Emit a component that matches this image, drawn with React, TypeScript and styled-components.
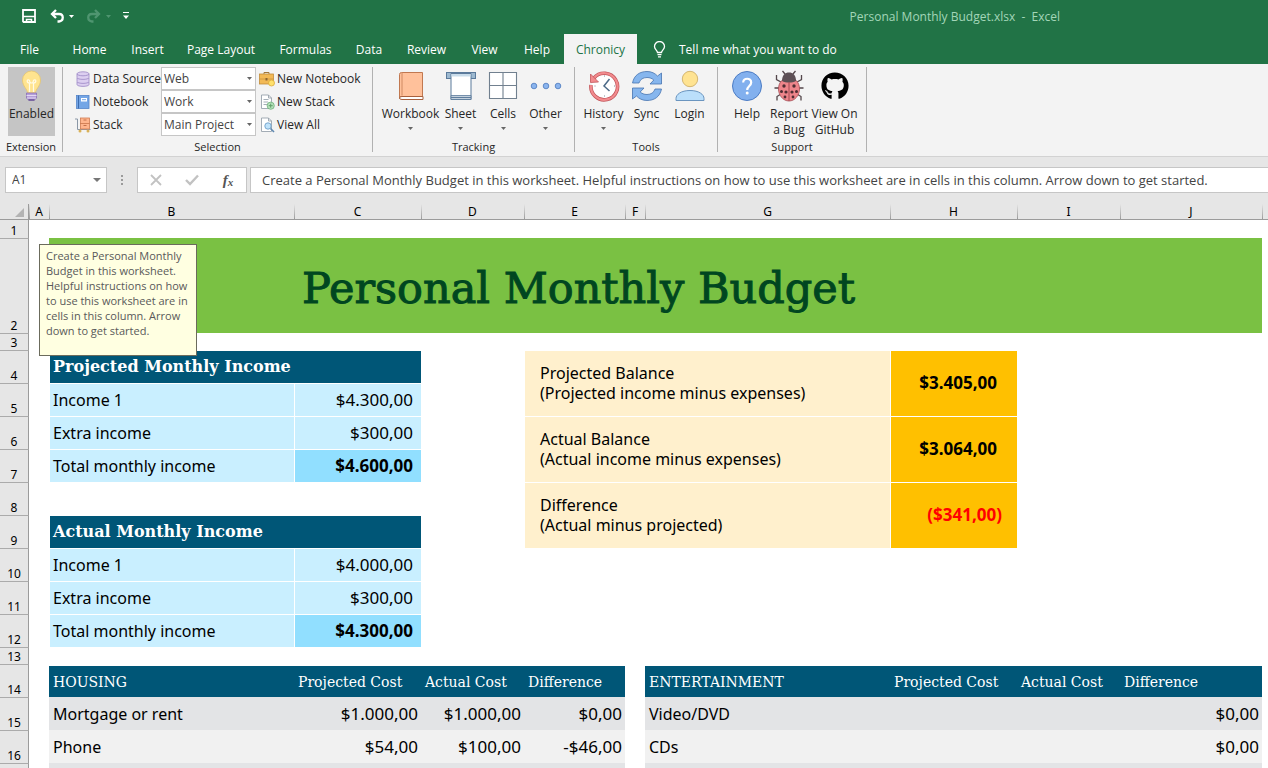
import React from 'react';
import styled, { createGlobalStyle, css } from 'styled-components';
import { FaGithub } from 'react-icons/fa';

const uiFont = '"Open Sans", "Segoe UI", sans-serif';
const cellFont = '"Noto Sans", "Lucida Sans", sans-serif';
const slabFont = '"DejaVu Serif", Rockwell, serif';

const GlobalStyle = createGlobalStyle`
  *, *::before, *::after { box-sizing: border-box; }
  body { margin: 0; background: #fff; font-family: ${uiFont}; font-size: 12px; color: #262626; }
  button, input, select { font: inherit; color: inherit; margin: 0; }
`;

/* ---------- window chrome ---------- */

const Window = styled.div`
  display: flex;
  flex-direction: column;
  height: 100vh;
  overflow: hidden;
`;

const TitleBar = styled.header`
  display: flex;
  align-items: center;
  height: 34px;
  padding: 0 0 2px 21px;
  background: #217346;
  color: #fff;
`;

const QuickButton = styled.button<{ $dim?: boolean }>`
  display: flex;
  align-items: center;
  gap: 4px;
  padding: 0;
  margin-right: 12px;
  border: 0;
  background: none;
  color: ${p => (p.$dim ? '#4f9570' : '#fff')};
`;

const DocumentName = styled.div`
  margin: 0 208px 0 auto;
  color: #a3d6b8;
  white-space: pre;
`;

const TabBar = styled.nav`
  display: flex;
  height: 30px;
  background: #217346;
  color: #fff;
`;

const Tab = styled.button<{ $active?: boolean; $width: number }>`
  flex: none;
  width: ${p => p.$width}px;
  padding: 0;
  border: 0;
  white-space: nowrap;
  background: ${p => (p.$active ? '#f3f3f3' : 'transparent')};
  color: ${p => (p.$active ? '#217346' : '#fff')};
`;

const TellMe = styled.button`
  display: flex;
  align-items: center;
  gap: 13px;
  padding: 0 0 0 16px;
  border: 0;
  background: none;
`;

/* ---------- ribbon ---------- */

const Ribbon = styled.section`
  display: flex;
  height: 93px;
  background: #f3f3f3;
  border-bottom: 1px solid #d2d2d2;
  color: #262626;
`;

const Group = styled.div<{ $width: number; $pad: number }>`
  display: flex;
  flex-direction: column;
  justify-content: space-between;
  flex: none;
  width: ${p => p.$width}px;
  margin: 3px 0 4px;
  border-right: 1px solid #b1b1b1;
  > div { padding-left: ${p => p.$pad}px; }
`;

const GroupBody = styled.div`
  display: flex;
  height: 70px;
`;

const GroupLabel = styled.h2`
  margin: 0;
  font-size: 11px;
  font-weight: 400;
  line-height: 10px;
  text-align: center;
  color: #262626;
`;

const BigButton = styled.button<{ $width: number; $pressed?: boolean }>`
  display: flex;
  flex-direction: column;
  align-items: center;
  flex: none;
  width: ${p => p.$width}px;
  height: 69px;
  padding: 3px 0 0;
  border: 0;
  white-space: pre;
  line-height: 16px;
  background: ${p => (p.$pressed ? '#c5c5c5' : 'transparent')};
  > svg:first-child { margin-bottom: 4px; flex: none; }
  > svg:nth-of-type(2) { margin-top: 5px; }
`;

const SelectionGrid = styled.div`
  display: grid;
  grid-template-columns: 86px 95px 1fr;
  grid-auto-rows: 23px;
  align-items: stretch;
`;

const FieldLabel = styled.label`
  display: flex;
  align-items: center;
  gap: 2px;
  white-space: nowrap;
`;

const Combo = styled.div`
  display: grid;
  align-items: center;
  > * { grid-area: 1 / 1; }
  > svg { justify-self: end; margin-right: 4px; pointer-events: none; }
`;

const ComboSelect = styled.select`
  appearance: none;
  width: 100%;
  height: 23px;
  padding: 0 2px;
  border: 1px solid #c6c6c6;
  border-radius: 0;
  background: #fff;
  color: #444;
`;

const SmallButton = styled.button`
  display: flex;
  align-items: center;
  gap: 2px;
  padding: 0 0 0 3px;
  border: 0;
  background: none;
  white-space: nowrap;
`;

/* ---------- formula bar ---------- */

const FormulaBar = styled.div`
  display: flex;
  align-items: center;
  height: 47px;
  padding: 0 0 2px 5px;
  background: #e6e6e6;
`;

const NameBox = styled.div`
  display: flex;
  align-items: center;
  width: 102px;
  height: 26px;
  padding-right: 5px;
  border: 1px solid #c6c6c6;
  background: #fff;
`;

const BareInput = styled.input`
  flex: 1;
  min-width: 0;
  padding: 0 0 0 6px;
  border: 0;
  outline: 0;
  background: none;
  color: #444;
`;

const Dots = styled.div`
  width: 30px;
  text-align: center;
  color: #9a9a9a;
  line-height: 0;
`;

const FormulaTools = styled.div`
  display: flex;
  align-items: center;
  justify-content: space-around;
  width: 110px;
  height: 26px;
  border: 1px solid #c6c6c6;
  background: #fff;
`;

const FormulaTool = styled.button`
  padding: 0;
  width: 30px;
  border: 0;
  background: none;
  color: #c2c2c2;
  line-height: 0;
`;

const FxButton = styled(FormulaTool)`
  color: #555;
  font: italic 700 15px/20px "Liberation Serif", serif;
  sub { font-size: 11px; line-height: 0; vertical-align: -1px; }
`;

const FormulaField = styled.div`
  display: flex;
  flex: 1;
  height: 26px;
  margin-left: 3px;
  padding-left: 5px;
  border: 1px solid #c6c6c6;
  border-right: 0;
  background: #fff;
  font-size: 13px;
`;

/* ---------- worksheet ---------- */

const Sheet = styled.main`
  position: relative;
  flex: 1;
  min-height: 0;
  overflow: hidden;
  background: #fff;
`;

const Grid = styled.table`
  width: 100%;
  table-layout: fixed;
  border-collapse: separate;
  border-spacing: 0;
  font-family: ${cellFont};
  font-size: 16px;
  line-height: 20px;
  color: #000;
  td, th { padding: 0; }
`;

const Row = styled.tr<{ $h: number }>`
  height: ${p => p.$h}px;
`;

const ColumnHead = styled.th`
  font-size: 12px;
  line-height: 15px;
  font-weight: 400;
  vertical-align: bottom;
  border-bottom: 1px solid #9b9b9b;
  background: linear-gradient(#e6e6e6, #9b9b9b) left / 1px 100% no-repeat #e6e6e6;
`;

const Corner = styled(ColumnHead)`
  text-align: right;
  background: #e6e6e6;
  border-right: 1px solid #9b9b9b;
  line-height: 0;
`;

const RowHead = styled.th`
  font-size: 12px;
  line-height: 15px;
  font-weight: 400;
  vertical-align: bottom;
  background: #e6e6e6;
  border-top: 1px solid #ababab;
  border-right: 1px solid #9b9b9b;
  tr:first-child > & { border-top: 0; }
`;

const Banner = styled.td`
  background: #7ac143;
  color: #004620;
  font-family: ${slabFont};
  font-size: 43px;
  line-height: 60px;
  -webkit-text-stroke: 1px #004620;
  && { padding: 4px 0 0 253px; }
`;

const IncomeTitle = styled.td`
  background: #005677;
  color: #fff;
  border-top: 1px solid #fff;
  border-left: 1px solid #fff;
  font-family: ${slabFont};
  font-size: 16px;
  font-weight: 700;
  && { padding-left: 3px; }
`;

const IncomeCell = styled.td<{ $amount?: boolean; $total?: boolean }>`
  background: ${p => (p.$total ? '#91dfff' : '#c9efff')};
  border-top: 1px solid #fff;
  border-left: 1px solid #fff;
  && { padding: ${p => (p.$amount ? '0 8px 0 0' : '0 0 0 3px')}; }
  ${p => p.$amount && css`text-align: right; font-size: 17px;`}
  ${p => p.$total && css`font-weight: 700;`}
`;

const BalanceCell = styled.td`
  background: #fff0cd;
  border-top: 1px solid #fff;
  border-left: 1px solid #fff;
  && { padding: 0 0 2px 15px; }
`;

const BalanceAmount = styled.td<{ $negative?: boolean }>`
  background: #ffc000;
  border-top: 1px solid #fff;
  border-left: 1px solid #fff;
  text-align: right;
  font-size: 17px;
  font-weight: 700;
  color: ${p => (p.$negative ? '#ff0000' : '#000')};
  && { padding: 0 ${p => (p.$negative ? 15 : 20)}px 2px 0; }
`;

const CostHead = styled.th`
  background: #005677;
  color: #fff;
  border-top: 2px solid #fff;
  font-family: ${slabFont};
  font-size: 14px;
  font-weight: 400;
  text-align: left;
  white-space: nowrap;
  && { padding-left: 4px; }
`;

const CostCell = styled.td<{ $alt?: boolean; $amount?: boolean }>`
  background: ${p => (p.$alt ? '#f1f1f1' : '#e3e4e6')};
  text-align: ${p => (p.$amount ? 'right' : 'left')};
  font-size: ${p => (p.$amount ? 17 : 16)}px;
  && { padding: 0 3px 0 4px; }
`;

const Tooltip = styled.aside`
  position: absolute;
  left: 39px;
  top: 40px;
  width: 158px;
  height: 112px;
  padding: 3px 2px 0 6px;
  border: 1px solid #6b6b5c;
  background: #ffffe1;
  color: #595959;
  font-size: 11px;
  line-height: 15px;
`;

/* ---------- icons ---------- */

const Caret = ({ color = '#666', size = 5 }: { color?: string; size?: number }) => (
  <svg width={size} height={size > 6 ? 4 : 3} viewBox="0 0 6 3" preserveAspectRatio="none"><path d="M0 0h6L3 3z" fill={color} /></svg>
);

const SaveIcon = () => (
  <svg width="16" height="16" viewBox="0 0 16 16" fill="none" stroke="currentColor" strokeWidth="1.800">
    <path d="M2 2h12v12H2.600L2 13.400z" /><path d="M2 8.500h12M5.500 14v-2.500h5V14" strokeWidth="1.500" />
  </svg>
);

const UndoIcon = ({ flip }: { flip?: boolean }) => (
  <svg width="16" height="14" viewBox="0 0 16 14" fill="none" stroke="currentColor" strokeWidth="2.300">
    <g transform={flip ? 'matrix(-1 0 0 1 16 0)' : undefined}>
      <path d="M7 1L3 5l4 4" /><path d="M3.500 5H10c5 0 5 7 0 7.500H8.500" />
    </g>
  </svg>
);

const CustomizeIcon = () => (
  <svg width="6" height="8" viewBox="0 0 6 8"><path d="M0 0h6v1H0zM0 3.500h6L3 7z" fill="currentColor" /></svg>
);

const BulbOutline = () => (
  <svg width="13" height="17" viewBox="0 0 13 17" fill="none" stroke="#fff" strokeWidth="1.300">
    <path d="M4.500 11.500c0-2-3-3-3-6a5 5 0 0 1 10 0c0 3-3 4-3 6zM4.500 13.700h4M5 15.800h3" />
  </svg>
);

const BulbIcon = () => (
  <svg width="32" height="32" viewBox="0 0 32 32">
    <path d="M11.500 23c0-4-5-6.500-5-13a9 9 0 0 1 18 0c0 6.500-5 9-5 13z" fill="#ffe48f" stroke="#e6c56e" strokeWidth=".8" />
    <path d="M13.500 22V13c-3 0-3-4-.5-3 1.500 1 0 3 2.500 3s1-2 2.500-3c2.500-1 2.500 3-.5 3v9" fill="none" stroke="#fffbe6" strokeWidth="1.200" />
    <path d="M10.500 23h10v5l-2 2h-6l-2-2z" fill="#b59fd8" stroke="#8a70b5" strokeWidth=".8" /><path d="M10.500 25.500h10M11 28h9" stroke="#e3d8f3" />
    <path d="M12.500 30h6" stroke="#6d5597" strokeWidth="1.500" />
  </svg>
);

const DatabaseIcon = () => (
  <svg width="16" height="16" viewBox="0 0 15 16" fill="#dccff0" stroke="#9b86c4" strokeWidth=".8">
    <path d="M1.500 11v2.500c0 2.500 12 2.500 12 0V11z" /><path d="M1.500 7v3.500c0 2.500 12 2.500 12 0V7z" />
    <path d="M1.500 3v3.500c0 2.500 12 2.500 12 0V3z" /><ellipse cx="7.500" cy="2.800" rx="6" ry="2" />
  </svg>
);

const NotebookIcon = () => (
  <svg width="16" height="16" viewBox="0 0 16 16">
    <rect x="1.500" y="1.500" width="12.500" height="13" fill="#74a6e6" stroke="#5585c9" strokeWidth=".8" />
    <path d="M3.500 1.500v13" stroke="#3d6cae" /><rect x="6" y="4" width="6" height="3.500" fill="#fff" /><path d="M7 5.700h4" stroke="#74a6e6" />
  </svg>
);

const StackIcon = () => (
  <svg width="16" height="16" viewBox="0 0 16 16">
    <path d="M0 2h2.500v10.500H15.500" fill="none" stroke="#8a97a6" /><rect x="5.500" y="1" width="9" height="5.500" fill="#ffb58d" stroke="#cf7a50" strokeWidth=".8" />
    <rect x="5.500" y="6.500" width="9" height="5.500" fill="#ffb58d" stroke="#cf7a50" strokeWidth=".8" />
    <path d="M8.500 3h3M8.500 8.500h3" stroke="#b35f3a" strokeWidth=".8" /><circle cx="5" cy="14" r="1.500" fill="#d9b25a" /><circle cx="13" cy="14" r="1.500" fill="#d9b25a" />
  </svg>
);

const BriefcaseIcon = () => (
  <svg width="16" height="16" viewBox="0 0 16 16">
    <path d="M5 3V1.500h5V3" fill="none" stroke="#a0763a" /><rect x=".5" y="3" width="14" height="10" fill="#f2b956" stroke="#c18d3b" strokeWidth=".8" />
    <path d="M.5 8h14" stroke="#c79243" strokeWidth=".8" /><rect x="6.500" y="7" width="2" height="2.500" fill="#8c6630" /><circle cx="12.500" cy="12" r="3" fill="#ffe16c" stroke="#dba93c" strokeWidth=".8" />
  </svg>
);

const PageIcon = ({ kind }: { kind: 'add' | 'find' }) => (
  <svg width="16" height="16" viewBox="0 0 16 16">
    <path d="M2.500 1h7l3 3v10.500h-10z" fill="#fff" stroke="#98a3ad" strokeWidth=".9" /><path d="M9.500 1v3h3" fill="none" stroke="#98a3ad" strokeWidth=".9" />
    {kind === 'add' ? (
      <><path d="M4.500 5.500h5M4.500 8h4.500M4.500 10.500h3.500" stroke="#a5afb8" /><circle cx="11.700" cy="11.700" r="3.600" fill="#b4e0ba" stroke="#6fb17a" strokeWidth=".8" /><path d="M11.700 9.700v4M9.700 11.700h4" stroke="#5f9f6a" /></>
    ) : (
      <><circle cx="9" cy="9" r="3.200" fill="#bfe3fb" stroke="#6f9fc8" strokeWidth=".9" /><path d="M11.500 11.500l3.500 3.500" stroke="#5f88b0" strokeWidth="1.600" /></>
    )}
  </svg>
);

const WorkbookIcon = () => (
  <svg width="32" height="32" viewBox="0 0 32 32">
    <path d="M4.500 4.500q0-2 2-2h21v24h-21q-2 0-2 2z" fill="#ffc19b" stroke="#c17850" /><path d="M7 2.500v23" stroke="#d08a63" fill="none" />
    <path d="M28 26.500v3h-21q-2.500 0-2.500-1.500t2.500-1.500z" fill="#fff" stroke="#a6603e" />
  </svg>
);

const SheetIcon = () => (
  <svg width="32" height="32" viewBox="0 0 32 32" stroke="#5b7a9b">
    <rect x="1.500" y="2.500" width="29" height="6" fill="#9db9d0" /><path d="M6 3.500h20v26H6z" fill="#fff" /><path d="M6.500 4h19v2.500h-19z" fill="#c9dcea" stroke="none" />
    <path d="M6 25.500h20v2H6zM6 27.500h20v2H6z" fill="#c2d0dd" strokeWidth=".8" />
  </svg>
);

const CellsIcon = () => (
  <svg width="32" height="32" viewBox="0 0 32 32" fill="#fff" stroke="#71808f" strokeWidth="1.100">
    <path d="M2.500 2.500h27v26h-27zM16 2.500v26M2.500 15.500h27" />
  </svg>
);

const OtherIcon = () => (
  <svg width="32" height="32" viewBox="0 0 32 32" fill="#8ab4ee" stroke="#4b78bd" strokeWidth=".8">
    <circle cx="4" cy="16" r="2.800" /><circle cx="16" cy="16" r="2.800" /><circle cx="28" cy="16" r="2.800" />
  </svg>
);

const HistoryIcon = () => (
  <svg width="32" height="32" viewBox="0 0 32 32" fill="none">
    <circle cx="16.500" cy="16" r="12.500" fill="#fff" />
    <path d="M6 8A13.300 13.300 0 1 1 3 15" stroke="#c2565b" strokeWidth="3.600" /><path d="M6 8A13.300 13.300 0 1 1 3 15.200" stroke="#f28b8e" strokeWidth="2.200" />
    <path d="M2.500 4v8.500l8-.5z" fill="#f28b8e" stroke="#c2565b" strokeWidth=".8" />
    <path d="M21.500 9L16 16l5.500 5" stroke="#4b6a88" strokeWidth="1.500" /><path d="M16.500 5.500v1M16.500 25.500v1M26 16h1M6.500 16h1" stroke="#7b8b9b" />
  </svg>
);

const syncArrow = 'M1.500 13C3 5 9 1.500 16 1.500c4.500 0 8 1.800 10.500 4.500l4-3v11H19l3.800-4C21 8.500 19 7.500 16 7.500c-4 0-7 2-8 5.500z';

const SyncIcon = () => (
  <svg width="32" height="32" viewBox="0 0 32 32" fill="#86b6ee" stroke="#4674b0" strokeWidth=".8">
    <path d={syncArrow} /><path d={syncArrow} transform="rotate(180 16 16)" />
  </svg>
);

const LoginIcon = () => (
  <svg width="32" height="32" viewBox="0 0 32 32">
    <circle cx="16" cy="9" r="7.700" fill="#ffe391" stroke="#cfb06a" strokeWidth=".9" /><path d="M2 30.500v-2c0-4 5-8 14-8s14 4 14 8v2z" fill="#bbdffb" stroke="#6b95bf" />
  </svg>
);

const HelpIcon = () => (
  <svg width="32" height="32" viewBox="0 0 32 32" fill="none">
    <circle cx="16" cy="16" r="14.500" fill="#82b0ee" stroke="#4c7cc4" /><path d="M12.200 12.500c0-5 8-5 8 0 0 3.500-4 3.500-4 7.500" stroke="#fff" strokeWidth="2.200" /><circle cx="16.200" cy="23" r="1.500" fill="#fff" />
  </svg>
);

const BugIcon = () => (
  <svg width="32" height="32" viewBox="0 0 32 32" fill="none">
    <path d="M12 4L9.500 1M20 4l2.500-3M8 12L3.500 9.500V5M24 12l4.500-2.500V5M6 18H1.500M26 18h4.500M8 24l-4 2.500v4M24 24l4 2.500v4" stroke="#54474b" strokeWidth="1.300" />
    <path d="M16 8c7 0 10.500 5 10.500 11S22 31 16 31 5.500 25 5.500 19 9 8 16 8z" fill="#ee858b" stroke="#a34a52" strokeWidth=".8" />
    <path d="M9 11C9 5 12 2.500 16 2.500S23 5 23 11C19 13 13 13 9 11z" fill="#5d5055" /><path d="M16 12v19" stroke="#a34a52" />
    <g fill="#4f2d33"><circle cx="11" cy="16" r="1.700" /><circle cx="21" cy="16" r="1.700" /><circle cx="8.500" cy="21.500" r="1.500" /><circle cx="23.500" cy="21.500" r="1.500" /><circle cx="13" cy="22" r="1.600" /><circle cx="19" cy="22" r="1.600" /><circle cx="12" cy="27" r="1.400" /><circle cx="20" cy="27" r="1.400" /></g>
  </svg>
);

const GithubIcon = () => (
  <svg width="32" height="32" viewBox="0 0 32 32"><FaGithub x="2" y="2" size={28} color="#000" /></svg>
);

/* ---------- data ---------- */

const tabs: [string, number][] = [
  ['File', 59], ['Home', 61], ['Insert', 55], ['Page Layout', 92], ['Formulas', 77],
  ['Data', 50], ['Review', 65], ['View', 51], ['Help', 54], ['Chronicy', 73],
];

const columns: [string, number][] = [
  ['A', 20], ['B', 245], ['C', 127], ['D', 103], ['E', 101], ['F', 20],
  ['G', 245], ['H', 127], ['I', 103], ['J', 142],
];

const note = 'Create a Personal Monthly Budget in this worksheet. Helpful instructions on how to use this worksheet are in cells in this column. Arrow down to get started.';

const Income = ({ label, amount, total }: { label: string; amount: string; total?: boolean }) => (
  <>
    <td />
    <IncomeCell>{label}</IncomeCell>
    <IncomeCell $amount $total={total}>{amount}</IncomeCell>
  </>
);

const Balance = ({ title, detail, amount, negative }: { title: string; detail: string; amount: string; negative?: boolean }) => (
  <>
    <td />
    <BalanceCell colSpan={3} rowSpan={2}>{title}<br />{detail}</BalanceCell>
    <BalanceAmount rowSpan={2} $negative={negative}>{amount}</BalanceAmount>
  </>
);

const Costs = ({ cells, alt }: { cells: string[]; alt?: boolean }) => (
  <>
    <td />
    {cells.slice(0, 4).map((c, i) => <CostCell key={i} $alt={alt} $amount={i > 0}>{c}</CostCell>)}
    <td />
    {cells.slice(4).map((c, i) => <CostCell key={i} $alt={alt} $amount={i > 0}>{c}</CostCell>)}
  </>
);

const costHeads = ['Projected Cost', 'Actual Cost', 'Difference'];

export default function App() {
  return (
    <Window>
      <GlobalStyle />
      <TitleBar>
        <QuickButton aria-label="Save"><SaveIcon /></QuickButton>
        <QuickButton aria-label="Undo"><UndoIcon /><Caret color="#fff" /></QuickButton>
        <QuickButton aria-label="Redo" $dim><UndoIcon flip /><Caret color="#4f9570" /></QuickButton>
        <QuickButton aria-label="Customize toolbar"><CustomizeIcon /></QuickButton>
        <DocumentName>{'Personal Monthly Budget.xlsx  -  Excel'}</DocumentName>
      </TitleBar>
      <TabBar>
        {tabs.map(([name, width]) => (
          <Tab key={name} $width={width} $active={name === 'Chronicy'}>{name}</Tab>
        ))}
        <TellMe><BulbOutline />Tell me what you want to do</TellMe>
      </TabBar>

      <Ribbon>
        <Group $width={63} $pad={8}>
          <GroupBody><BigButton $width={47} $pressed aria-pressed="true"><BulbIcon />Enabled</BigButton></GroupBody>
          <GroupLabel>Extension</GroupLabel>
        </Group>
        <Group $width={310} $pad={12}>
          <SelectionGrid>
            <FieldLabel htmlFor="source"><DatabaseIcon />Data Source</FieldLabel>
            <Combo><ComboSelect id="source"><option>Web</option></ComboSelect><Caret /></Combo>
            <SmallButton><BriefcaseIcon />New Notebook</SmallButton>
            <FieldLabel htmlFor="notebook"><NotebookIcon />Notebook</FieldLabel>
            <Combo><ComboSelect id="notebook"><option>Work</option></ComboSelect><Caret /></Combo>
            <SmallButton><PageIcon kind="add" />New Stack</SmallButton>
            <FieldLabel htmlFor="stack"><StackIcon />Stack</FieldLabel>
            <Combo><ComboSelect id="stack"><option>Main Project</option></ComboSelect><Caret /></Combo>
            <SmallButton><PageIcon kind="find" />View All</SmallButton>
          </SelectionGrid>
          <GroupLabel>Selection</GroupLabel>
        </Group>
        <Group $width={202} $pad={9}>
          <GroupBody>
            <BigButton $width={57}><WorkbookIcon />Workbook<Caret /></BigButton>
            <BigButton $width={43}><SheetIcon />Sheet<Caret /></BigButton>
            <BigButton $width={42}><CellsIcon />Cells<Caret /></BigButton>
            <BigButton $width={43}><OtherIcon />Other<Caret /></BigButton>
          </GroupBody>
          <GroupLabel>Tracking</GroupLabel>
        </Group>
        <Group $width={143} $pad={7}>
          <GroupBody>
            <BigButton $width={43}><HistoryIcon />History<Caret /></BigButton>
            <BigButton $width={43}><SyncIcon />Sync</BigButton>
            <BigButton $width={43}><LoginIcon />Login</BigButton>
          </GroupBody>
          <GroupLabel>Tools</GroupLabel>
        </Group>
        <Group $width={149} $pad={8}>
          <GroupBody>
            <BigButton $width={42}><HelpIcon />Help</BigButton>
            <BigButton $width={42}><BugIcon />{'Report\na Bug'}</BigButton>
            <BigButton $width={49}><GithubIcon />{'View On\nGitHub'}</BigButton>
          </GroupBody>
          <GroupLabel>Support</GroupLabel>
        </Group>
      </Ribbon>

      <FormulaBar>
        <NameBox><BareInput aria-label="Name box" defaultValue="A1" /><Caret size={8} color="#777" /></NameBox>
        <Dots>
          <svg width="2" height="12" viewBox="0 0 2 12" fill="currentColor"><path d="M0 1h2v2H0zM0 5h2v2H0zM0 9h2v2H0z" /></svg>
        </Dots>
        <FormulaTools>
          <FormulaTool aria-label="Cancel">
            <svg width="12" height="12" viewBox="0 0 12 12"><path d="M1 1l10 10M11 1L1 11" stroke="currentColor" strokeWidth="1.800" /></svg>
          </FormulaTool>
          <FormulaTool aria-label="Enter">
            <svg width="14" height="12" viewBox="0 0 14 12"><path d="M1 6l4 4 8-8.500" fill="none" stroke="currentColor" strokeWidth="2.400" /></svg>
          </FormulaTool>
          <FxButton aria-label="Insert function">f<sub>x</sub></FxButton>
        </FormulaTools>
        <FormulaField><BareInput aria-label="Formula" defaultValue={note} /></FormulaField>
      </FormulaBar>

      <Sheet>
        <Grid>
          <colgroup>
            <col width="29" />
            {columns.map(([name, width]) => <col key={name} width={width} />)}
            <col />
          </colgroup>
          <thead>
            <Row $h={16}>
              <Corner aria-label="Select all">
                <svg width="13" height="13" viewBox="0 0 13 13"><path d="M9 2v9H0z" fill="#b3b3b3" /></svg>
              </Corner>
              {columns.map(([name]) => <ColumnHead key={name}>{name}</ColumnHead>)}
              <ColumnHead aria-label="K" />
            </Row>
          </thead>
          <tbody>
            <Row $h={18}><RowHead>1</RowHead></Row>
            <Row $h={95}><RowHead>2</RowHead><td /><Banner colSpan={9}>Personal Monthly Budget</Banner></Row>
            <Row $h={17}><RowHead>3</RowHead></Row>
            <Row $h={33}>
              <RowHead>4</RowHead><td /><IncomeTitle colSpan={2}>Projected Monthly Income</IncomeTitle>
              <Balance title="Projected Balance" detail="(Projected income minus expenses)" amount="$3.405,00" />
            </Row>
            <Row $h={33}><RowHead>5</RowHead><Income label="Income 1" amount="$4.300,00" /></Row>
            <Row $h={33}>
              <RowHead>6</RowHead><Income label="Extra income" amount="$300,00" />
              <Balance title="Actual Balance" detail="(Actual income minus expenses)" amount="$3.064,00" />
            </Row>
            <Row $h={33}><RowHead>7</RowHead><Income label="Total monthly income" amount="$4.600,00" total /></Row>
            <Row $h={33}>
              <RowHead>8</RowHead><td colSpan={3} />
              <Balance title="Difference" detail="(Actual minus projected)" amount="($341,00)" negative />
            </Row>
            <Row $h={33}><RowHead>9</RowHead><td /><IncomeTitle colSpan={2}>Actual Monthly Income</IncomeTitle></Row>
            <Row $h={33}><RowHead>10</RowHead><Income label="Income 1" amount="$4.000,00" /></Row>
            <Row $h={33}><RowHead>11</RowHead><Income label="Extra income" amount="$300,00" /></Row>
            <Row $h={33}><RowHead>12</RowHead><Income label="Total monthly income" amount="$4.300,00" total /></Row>
            <Row $h={17}><RowHead>13</RowHead></Row>
            <Row $h={33}>
              <RowHead>14</RowHead><td /><CostHead>HOUSING</CostHead>
              {costHeads.map(h => <CostHead key={h}>{h}</CostHead>)}
              <td /><CostHead>ENTERTAINMENT</CostHead>
              {costHeads.map(h => <CostHead key={h}>{h}</CostHead>)}
            </Row>
            <Row $h={33}><RowHead>15</RowHead><Costs cells={['Mortgage or rent', '$1.000,00', '$1.000,00', '$0,00', 'Video/DVD', '', '', '$0,00']} /></Row>
            <Row $h={33}><RowHead>16</RowHead><Costs alt cells={['Phone', '$54,00', '$100,00', '-$46,00', 'CDs', '', '', '$0,00']} /></Row>
            <Row $h={33}><RowHead /><Costs cells={['', '', '', '', '', '', '', '']} /></Row>
          </tbody>
        </Grid>
        <Tooltip>{note}</Tooltip>
      </Sheet>
    </Window>
  );
}
